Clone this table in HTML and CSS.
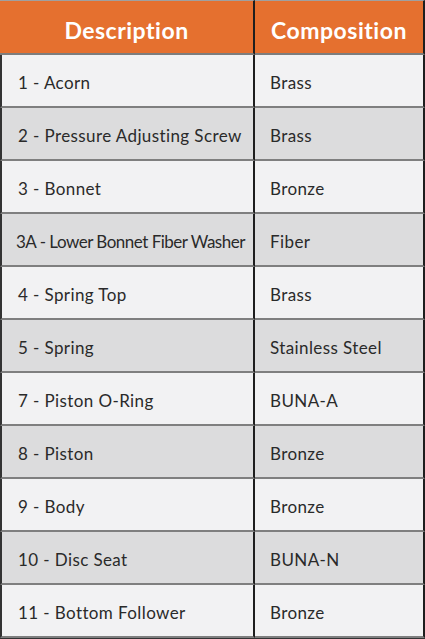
FILE: index.html
```html
<!DOCTYPE html>
<html>
<head>
<meta charset="utf-8">
<link rel="stylesheet" href="styles.css">
</head>
<body>
<table class="parts">
  <colgroup><col class="c1"><col class="c2"></colgroup>
  <thead>
    <tr><th>Description</th><th>Composition</th></tr>
  </thead>
  <tbody>
    <tr><td>1 - Acorn</td><td>Brass</td></tr>
    <tr><td>2 - Pressure Adjusting Screw</td><td>Brass</td></tr>
    <tr><td>3 - Bonnet</td><td>Bronze</td></tr>
    <tr><td class="tight">3A - Lower Bonnet Fiber Washer</td><td>Fiber</td></tr>
    <tr><td>4 - Spring Top</td><td>Brass</td></tr>
    <tr><td>5 - Spring</td><td>Stainless Steel</td></tr>
    <tr><td>7 - Piston O-Ring</td><td>BUNA-A</td></tr>
    <tr><td>8 - Piston</td><td>Bronze</td></tr>
    <tr><td>9 - Body</td><td>Bronze</td></tr>
    <tr><td>10 - Disc Seat</td><td>BUNA-N</td></tr>
    <tr><td>11 - Bottom Follower</td><td>Bronze</td></tr>
  </tbody>
</table>
</body>
</html>
```
FILE: styles.css
```css
html, body {
  margin: 0;
  padding: 0;
  background: #ffffff;
}
.parts {
  border-collapse: separate;
  border-spacing: 0;
  table-layout: fixed;
  width: 425px;
  border-bottom: 1px solid #333333;
  font-family: Lato, "Open Sans", sans-serif;
}
.c1 { width: 255px; }
.c2 { width: 170px; }
.parts th, .parts td {
  box-sizing: border-box;
  padding: 0;
  margin: 0;
}
.parts th {
  height: 55px;
  padding-top: 6px;
  background: #e5702f;
  color: #ffffff;
  font-size: 23px;
  font-weight: 700;
  letter-spacing: 0.5px;
  text-align: center;
  border-top: 1px solid #a0a0a0;
  border-bottom: 2px solid #7d7d7d;
  border-right: 2px solid #1e1e1e;
}
.parts td {
  height: 53px;
  padding-top: 4px;
  color: #2a2a2a;
  font-size: 17px;
  letter-spacing: 0.4px;
  text-align: left;
  padding-left: 17px;
  border-bottom: 2px solid #7f7f7f;
  border-right: 2px solid #1e1e1e;
  vertical-align: middle;
}
.parts td:first-child {
  border-left: 2px solid #333333;
  padding-left: 16px;
}
.parts td:last-child {
  padding-left: 15px;
}
.parts tbody tr:nth-child(odd) td { background: #f2f2f3; }
.parts tbody tr:nth-child(even) td { background: #dcdcdd; }
.parts td.tight {
  letter-spacing: -0.5px;
  padding-left: 14px;
}
```
